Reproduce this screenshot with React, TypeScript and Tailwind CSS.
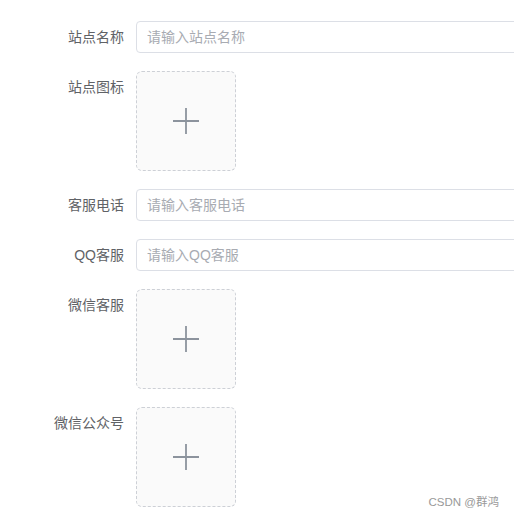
import React from 'react';

type Field = { label: string; kind: 'input' | 'upload'; placeholder?: string };

const fields: Field[] = [
  { label: '站点名称', kind: 'input', placeholder: '请输入站点名称' },
  { label: '站点图标', kind: 'upload' },
  { label: '客服电话', kind: 'input', placeholder: '请输入客服电话' },
  { label: 'QQ客服', kind: 'input', placeholder: '请输入QQ客服' },
  { label: '微信客服', kind: 'upload' },
  { label: '微信公众号', kind: 'upload' },
];

const PlusIcon = () => (
  <svg width="28" height="28" viewBox="0 0 28 28" fill="none">
    <path d="M14 1V27M1 14H27" stroke="#8c939d" strokeWidth="1.8" />
  </svg>
);

const FormItem = ({ field }: { field: Field }) => (
  <div className="flex items-start">
    <label className="w-[136px] shrink-0 pr-[12px] text-right text-[14px] leading-[32px] text-[#606266]">
      {field.label}
    </label>
    {field.kind === 'input' ? (
      <input
        className="h-[32px] w-[420px] shrink-0 rounded-[4px] border border-[#dcdfe6] bg-white px-[10px] text-[14px] text-[#606266] outline-none placeholder:text-[#a8abb2]"
        placeholder={field.placeholder}
      />
    ) : (
      <div className="flex h-[100px] w-[100px] shrink-0 items-center justify-center rounded-[6px] border border-dashed border-[#cdd0d6] bg-[#fafafa]">
        <PlusIcon />
      </div>
    )}
  </div>
);

export default function App() {
  return (
    <div
      className="relative h-[519px] w-[514px] overflow-hidden bg-white"
      style={{ fontFamily: '"Liberation Sans", "Noto Sans CJK SC", sans-serif' }}
    >
      <form className="flex flex-col gap-[18px] pt-[21px]">
        {fields.map((f) => (
          <FormItem key={f.label} field={f} />
        ))}
      </form>
      <div className="absolute right-[15px] bottom-[8px] text-[11.5px] text-[#999]">CSDN @群鸿</div>
    </div>
  );
}
